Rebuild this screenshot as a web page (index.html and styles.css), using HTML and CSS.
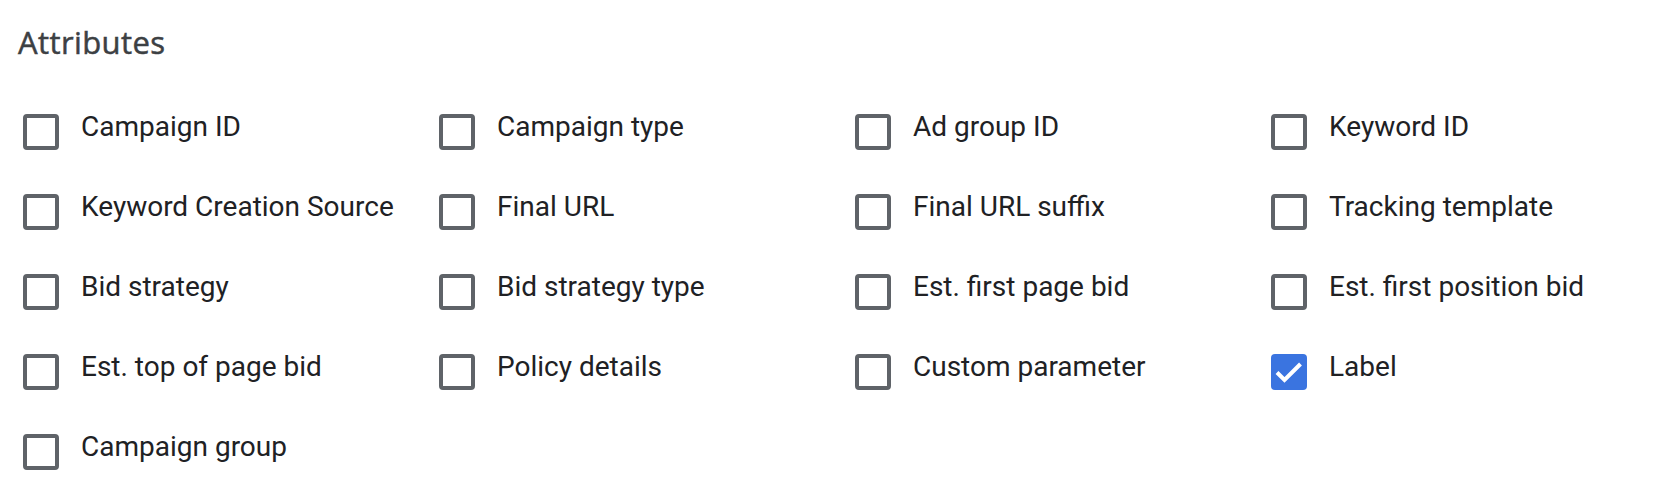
FILE: index.html
```html
<!DOCTYPE html>
<html lang="en">
<head>
    <meta charset="UTF-8">
    <meta name="viewport" content="width=device-width, initial-scale=1.0">
    <title>Attributes</title>
    <link rel="stylesheet" href="styles.css">
</head>
<body>

    <div class="panel">
        <h2>Attributes</h2>

        <div class="options">
            <label class="option"><span class="box"></span><span class="text">Campaign ID</span></label>
            <label class="option"><span class="box"></span><span class="text">Campaign type</span></label>
            <label class="option"><span class="box"></span><span class="text">Ad group ID</span></label>
            <label class="option"><span class="box"></span><span class="text">Keyword ID</span></label>

            <label class="option"><span class="box"></span><span class="text">Keyword Creation Source</span></label>
            <label class="option"><span class="box"></span><span class="text">Final URL</span></label>
            <label class="option"><span class="box"></span><span class="text">Final URL suffix</span></label>
            <label class="option"><span class="box"></span><span class="text">Tracking template</span></label>

            <label class="option"><span class="box"></span><span class="text">Bid strategy</span></label>
            <label class="option"><span class="box"></span><span class="text">Bid strategy type</span></label>
            <label class="option"><span class="box"></span><span class="text">Est. first page bid</span></label>
            <label class="option"><span class="box"></span><span class="text">Est. first position bid</span></label>

            <label class="option"><span class="box"></span><span class="text">Est. top of page bid</span></label>
            <label class="option"><span class="box"></span><span class="text">Policy details</span></label>
            <label class="option"><span class="box"></span><span class="text">Custom parameter</span></label>
            <label class="option checked">
                <span class="box">
                    <svg viewBox="0 0 36 36" width="36" height="36"><polyline points="6,18.5 13.5,26 29.5,10" fill="none" stroke="#fff" stroke-width="4"/></svg>
                </span>
                <span class="text">Label</span>
            </label>

            <label class="option"><span class="box"></span><span class="text">Campaign group</span></label>
        </div>
    </div>

</body>
</html>
```

FILE: styles.css
```css
/* General Styles */
body {
    margin: 0;
    padding: 0;
    background: #fff;
    font-family: Roboto, "Liberation Sans", sans-serif;
    color: #202124;
}

.panel {
    padding: 22px 0 0 18px;
}

h2 {
    margin: 0;
    font-family: "Open Sans", Roboto, sans-serif;
    font-size: 31px;
    font-weight: 400;
    line-height: 40px;
    color: #3c4043;
    letter-spacing: 0.4px;
    -webkit-text-stroke: 0.5px #3c4043;
}

/* Checkbox grid */
.options {
    display: grid;
    grid-template-columns: repeat(4, 416px);
    grid-auto-rows: 80px;
    margin: 52px 0 0 5px;
}

.option {
    display: flex;
    align-items: flex-start;
    gap: 22px;
    cursor: pointer;
}

.box {
    flex: none;
    width: 36px;
    height: 36px;
    box-sizing: border-box;
    border: 4px solid #5f6368;
    border-radius: 4px;
}

.option.checked .box {
    border: none;
    background: #3a74e0;
}

.box svg {
    display: block;
}

.text {
    font-size: 28px;
    line-height: 24px;
    padding-top: 1px;
}
```
